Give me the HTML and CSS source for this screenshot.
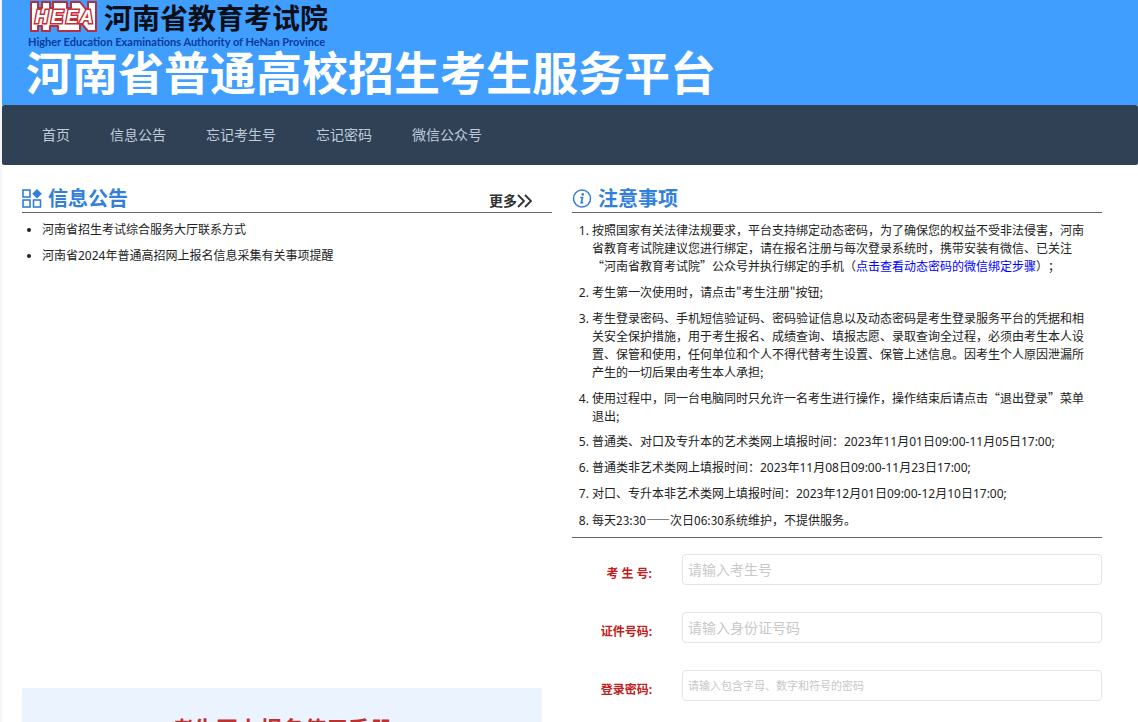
FILE: index.html
```html
<!DOCTYPE html>
<html lang="zh-CN">
<head>
<meta charset="utf-8">
<title>河南省普通高校招生考生服务平台</title>
<link rel="stylesheet" href="styles.css">
</head>
<body>
<div class="page">
  <header class="masthead">
    <div class="brand">
      <svg class="brand-mark" viewBox="0 0 70 34" width="70" height="34" role="img" aria-label="HEEA">
        <g class="mark-blocks">
          <path d="M3 2H10V8H14V2H22V8H25V2H39V8H43V2H52L60 12V2H68V31H60L52 22V31H30V26H22V31H14V26H10V31H3Z"/>
        </g>
        <text class="mark-text" x="7 23 38 52" y="23">HEEA</text>
      </svg>
      <span class="brand-name">河南省教育考试院</span>
    </div>
    <div class="brand-en">Higher Education Examinations Authority of HeNan Province</div>
    <h1 class="site-title">河南省普通高校招生考生服务平台</h1>
  </header>
  <nav class="nav">
    <a href="#">首页</a>
    <a href="#">信息公告</a>
    <a href="#">忘记考生号</a>
    <a href="#">忘记密码</a>
    <a href="#">微信公众号</a>
  </nav>
  <main class="content">
    <section class="column">
      <div class="section-head">
        <svg class="head-icon" viewBox="0 0 20 20" width="20" height="20" aria-hidden="true">
          <g fill="none" stroke="currentColor" stroke-width="1.6">
            <rect x="1" y="1" width="7" height="7"/>
            <rect x="1" y="11" width="7" height="7"/>
            <rect x="11.500" y="11" width="7" height="7"/>
          </g>
          <path d="M15 0L19.800 4.800L15 9.600L10.200 4.800Z" fill="currentColor"/>
        </svg>
        <h2>信息公告</h2>
        <a class="more" href="#">更多<svg viewBox="0 0 15 16" width="15" height="16" aria-hidden="true"><path d="M1 2L7 8L1 14M8 2L14 8L8 14" fill="none" stroke="currentColor" stroke-width="1.8"/></svg></a>
      </div>
      <ul class="news">
        <li>河南省招生考试综合服务大厅联系方式</li>
        <li>河南省2024年普通高招网上报名信息采集有关事项提醒</li>
      </ul>
      <div class="manual">考生网上报名使用手册</div>
    </section>
    <section class="column">
      <div class="section-head">
        <svg class="head-icon" viewBox="0 0 20 20" width="20" height="20" aria-hidden="true">
          <circle cx="10" cy="9.500" r="8.500" fill="none" stroke="currentColor" stroke-width="1.500"/>
          <circle cx="10.700" cy="5.400" r="1.300" fill="currentColor"/>
          <path d="M8.200 8.500H10.500L9.300 13.700H11.200" fill="none" stroke="currentColor" stroke-width="1.700"/>
        </svg>
        <h2>注意事项</h2>
      </div>
      <ol class="rules">
        <li>按照国家有关法律法规要求，平台支持绑定动态密码，为了确保您的权益不受非法侵害，河南省教育考试院建议您进行绑定，请在报名注册与每次登录系统时，携带安装有微信、已关注“河南省教育考试院”公众号并执行绑定的手机（<a href="#">点击查看动态密码的微信绑定步骤</a>）；</li>
        <li>考生第一次使用时，请点击"考生注册"按钮;</li>
        <li>考生登录密码、手机短信验证码、密码验证信息以及动态密码是考生登录服务平台的凭据和相关安全保护措施，用于考生报名、成绩查询、填报志愿、录取查询全过程，必须由考生本人设置、保管和使用，任何单位和个人不得代替考生设置、保管上述信息。因考生个人原因泄漏所产生的一切后果由考生本人承担;</li>
        <li>使用过程中，同一台电脑同时只允许一名考生进行操作，操作结束后请点击“退出登录”菜单退出;</li>
        <li class="dated">普通类、对口及专升本的艺术类网上填报时间：2023年11月01日09:00-11月05日17:00;</li>
        <li class="dated">普通类非艺术类网上填报时间：2023年11月08日09:00-11月23日17:00;</li>
        <li class="dated">对口、专升本非艺术类网上填报时间：2023年12月01日09:00-12月10日17:00;</li>
        <li>每天23:30——次日06:30系统维护，不提供服务。</li>
      </ol>
      <form class="login">
        <div class="field">
          <label for="examinee">考 生 号:</label>
          <input id="examinee" type="text" placeholder="请输入考生号">
        </div>
        <div class="field">
          <label for="idcard">证件号码:</label>
          <input id="idcard" type="text" placeholder="请输入身份证号码">
        </div>
        <div class="field">
          <label for="password">登录密码:</label>
          <input id="password" class="small" type="password" placeholder="请输入包含字母、数字和符号的密码">
        </div>
      </form>
    </section>
  </main>
</div>
</body>
</html>
```
FILE: styles.css
```css
* {
  box-sizing: border-box;
}

body {
  margin: 0;
  background: #fff;
  color: #222;
  font: 12px/18px "Noto Sans", "Noto Sans CJK SC", sans-serif;
}

.page {
  height: 100vh;
  overflow: hidden;
  border-left: 2px solid #f5f5f5;
}

.masthead {
  padding: 0 24px 14px;
  background: #409eff;
}

.brand {
  display: flex;
  align-items: center;
  gap: 6px;
  height: 34px;
  padding-left: 2px;
}

.mark-blocks {
  fill: #fff;
  stroke: #b5303c;
  stroke-width: 2;
  stroke-linejoin: round;
}

.mark-text {
  fill: #fff;
  stroke: #c0303a;
  stroke-width: 3;
  paint-order: stroke;
  font: italic bold 18px "Liberation Sans", sans-serif;
}

.brand-name {
  color: #0a0f18;
  font: bold 28px/34px "Noto Sans CJK SC", sans-serif;
}

.brand-en {
  padding-left: 2px;
  color: #0b3a9c;
  font: bold 11px/15px Lato, sans-serif;
  white-space: nowrap;
}

.site-title {
  margin: 0;
  color: #fff;
  font: bold 46px/42px "Noto Sans CJK SC", sans-serif;
  white-space: nowrap;
}

.nav {
  display: flex;
  padding: 0 20px;
  border-radius: 2px;
  background: #304156;
}

.nav a {
  padding: 0 20px;
  color: #bfcbd9;
  font-size: 14px;
  line-height: 60px;
  text-decoration: none;
}

.content {
  display: grid;
  grid-template-columns: 1fr 1fr;
  gap: 20px;
  padding: 20px 36px 0 20px;
}

.section-head {
  display: flex;
  align-items: center;
  height: 28px;
  border-bottom: 1px solid #666;
  color: #337fdc;
}

.head-icon {
  margin-right: 6px;
}

.section-head h2 {
  margin: 0;
  font-size: 20px;
  line-height: 28px;
}

.more {
  display: flex;
  align-items: center;
  margin-left: auto;
  padding: 4px 20px 0 0;
  color: #303133;
  font-size: 14px;
  font-weight: bold;
  text-decoration: none;
}

.news,
.rules {
  display: flex;
  flex-direction: column;
  gap: 8px;
  margin: 0;
  padding: 8px 16px 8px 20px;
}

.news {
  min-height: 475px;
}

.rules {
  border-bottom: 1px solid #666;
  font-family: "Noto Sans CJK SC", sans-serif;
  text-spacing-trim: space-all;
}

.rules .dated,
.rules li::marker {
  font-family: "Noto Sans", "Noto Sans CJK SC", sans-serif;
}

.rules a {
  color: #00f;
  text-decoration: none;
}

.manual {
  margin-right: 10px;
  padding: 22px;
  border-radius: 2px;
  background: #ebf3ff;
  color: #c03030;
  font-size: 22px;
  font-weight: bold;
  line-height: 36px;
  text-align: center;
}

.login {
  display: flex;
  flex-direction: column;
  gap: 27px;
  padding-top: 16px;
}

.field {
  display: grid;
  grid-template-columns: 80px 1fr;
  gap: 30px;
}

.field label {
  padding-top: 8px;
  color: #c02020;
  font-weight: bold;
  line-height: 23px;
  text-align: right;
}

.field input {
  width: 100%;
  height: 31px;
  padding: 0 5px 2px;
  border: 1px solid #e4e4e4;
  border-radius: 4px;
  background: #fff;
  font: 14px "Noto Sans CJK SC", sans-serif;
}

.field .small {
  font-size: 11px;
}

.field input::placeholder {
  color: #c8c8c8;
}
```
